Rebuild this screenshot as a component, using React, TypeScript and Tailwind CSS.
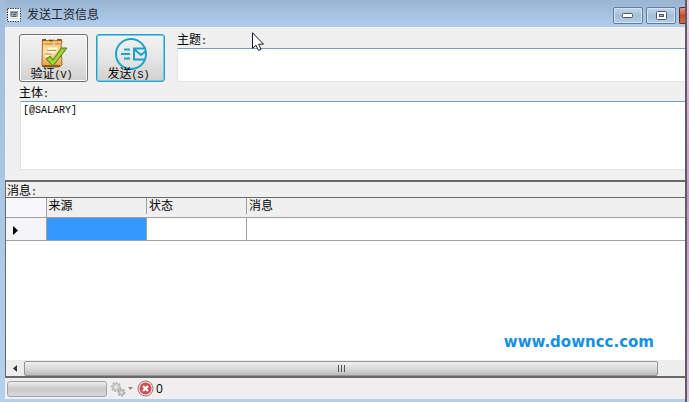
import React from "react";

const Latin = ({ children }: { children: React.ReactNode }) => (
  <span className="font-['Liberation_Mono',monospace] text-[10px]">{children}</span>
);

function AppIcon() {
  return (
    <svg width="14" height="14" viewBox="0 0 14 14" aria-hidden="true">
      <rect width="14" height="14" rx="1" fill="#f4f7fa" />
      <rect x=".5" y=".5" width="13" height="13" fill="none" stroke="#30363e" strokeDasharray="1.5 1" />
      <rect x="3" y="3" width="8" height="6" fill="#9aa5b3" />
      <path d="M4 4.5h2m1 0h3M4 6.5h1m1 0h3M5 8.5h4" stroke="#515d6c" />
      <path d="M3 10.5h8" stroke="#d0d8e0" />
    </svg>
  );
}

function VerifyIcon() {
  return (
    <svg className="shrink-0" width="32" height="32" viewBox="0 0 30 32" aria-hidden="true">
      <defs>
        <linearGradient id="paper" x1="0" y1="0" x2="0" y2="1">
          <stop offset="0" stopColor="#f3b75b" />
          <stop offset=".45" stopColor="#fde5ae" />
          <stop offset="1" stopColor="#e99a35" />
        </linearGradient>
      </defs>
      <path d="M3.500 2.500 6 1l2 2 2-1 2 1 3-1 2 1 3-2 3 2-1 4 1 20-3 2H5l-2-2z" fill="url(#paper)" stroke="#a76a25" />
      <path d="M3 2h4M10 2.500h4M18 2h5M3 28h18" stroke="#7c4318" strokeWidth="1.500" />
      <path d="M5 6h9M16 6h5" stroke="#b98137" />
      <path d="M9 10.500h9M9 14h7M6 18h5" stroke="#fff8df" strokeWidth="2" />
      <path d="M8 12.500h9M6 16h6" stroke="#c99245" />
      <path d="m7 21 4-3 3 4 8-12h6L14 28z" fill="#8fc02e" stroke="#55801b" />
      <path d="m10 21 4 4 10-13" fill="none" stroke="#a8d63f" strokeWidth="2" />
    </svg>
  );
}

function SendIcon() {
  return (
    <svg className="shrink-0" width="32" height="32" viewBox="0 0 32 32" fill="none" stroke="#1ba3c6" strokeWidth="2" aria-hidden="true">
      <circle cx="16" cy="16" r="15" />
      <path d="M31 10.500H19v11h11M19 11l7 6 5-4M9 11.500h6M6 16h9M9 20.500h6" />
    </svg>
  );
}

function ToolButton({ icon, label, hotkey, active = false }: { icon: React.ReactNode; label: string; hotkey: string; active?: boolean }) {
  return (
    <button
      className={`flex h-12 w-[69px] shrink-0 flex-col items-center rounded-[3px] border bg-gradient-to-b from-[#f3f3f3] via-[#e6e6e6] to-[#d0d0d0] pt-[3px] ${
        active ? "border-[#2c9fc7] shadow-[inset_0_0_0_1px_#6ccdea]" : "border-[#707070] shadow-[inset_0_0_0_1px_#fafafa]"
      }`}
    >
      {icon}
      <span className="-mt-1 shrink-0 pr-1 leading-4">
        {label}
        <Latin>({hotkey})</Latin>
      </span>
    </button>
  );
}

function TitleBar() {
  const control =
    "flex h-[17px] w-[30px] items-center justify-center rounded-[2px] border border-[#5f7b9b] bg-gradient-to-b from-[#c2d6eb] via-[#a5bfda] to-[#b5cee8] shadow-[inset_0_0_0_1px_#d5e4f3]";
  return (
    <header className="flex h-[27px] items-start justify-between overflow-hidden bg-gradient-to-b from-[#9ab5d2] to-[#b2cde9] pl-[2px]">
      <div className="flex items-center gap-[6px] pt-[7px] text-[#1b2430]">
        <AppIcon />
        <h1 className="text-[12px] leading-4">发送工资信息</h1>
      </div>
      <div className="flex gap-[3px] pt-[7px]">
        <button className={control} aria-label="最小化">
          <svg width="12" height="6" viewBox="0 0 12 6">
            <rect x=".5" y=".5" width="10" height="4" rx="1" fill="#fff" stroke="#4a5868" />
          </svg>
        </button>
        <button className={control} aria-label="最大化">
          <svg width="11" height="9" viewBox="0 0 11 9">
            <rect x=".5" y=".5" width="10" height="8" rx="1" fill="#fff" stroke="#4a5868" />
            <rect x="3.500" y="3.500" width="4" height="2" fill="#9db8d2" stroke="#4a5868" />
          </svg>
        </button>
        <button
          className="h-[17px] w-[6px] rounded-l-[2px] border border-r-0 border-[#6b2a25] bg-gradient-to-b from-[#e29a88] via-[#c9492f] to-[#d36a4c]"
          aria-label="关闭"
        />
      </div>
    </header>
  );
}

function MessageForm() {
  return (
    <section className="pb-[10px] pl-[14px] pt-1">
      <div className="flex gap-2">
        <div className="flex gap-2 pt-[3px]">
          <ToolButton icon={<VerifyIcon />} label="验证" hotkey="V" />
          <ToolButton icon={<SendIcon />} label="发送" hotkey="S" active />
        </div>
        <div className="flex min-w-0 flex-1 flex-col pl-1">
          <label htmlFor="subject" className="h-[17px] leading-[18px]">
            主题<Latin>:</Latin>
          </label>
          <input
            id="subject"
            className="h-[34px] w-full border border-r-0 border-[#dfe4ea] border-t-[#7a9dbd] bg-white px-1 outline-none"
          />
        </div>
      </div>
      <label htmlFor="body" className="mt-[3px] block h-4 leading-4">
        主体<Latin>:</Latin>
      </label>
      <div className="pl-px">
        <textarea
          id="body"
          defaultValue="[@SALARY]"
          className="block h-[69px] w-full resize-none overflow-hidden border border-r-0 border-[#dfe4ea] border-t-[#7a9dbd] bg-white px-[2px] py-px font-['Liberation_Mono',monospace] text-[10px] leading-4 outline-none"
        />
      </div>
    </section>
  );
}

function MessageGrid() {
  const head = "h-[19px] p-0 align-top text-left font-normal leading-4";
  const divider = <span className="-mr-px h-4 w-px bg-[#a0a0a0]" />;
  return (
    <section className="flex flex-1 flex-col border-l border-t-2 border-[#696969] bg-[#f0f0f0]">
      <h2 className="h-[15px] pl-px leading-[18px]">
        消息<Latin>:</Latin>
      </h2>
      <div className="flex flex-1 flex-col border-b-2 border-t border-[#696969] bg-white">
        <table className="w-full table-fixed border-collapse">
          <colgroup>
            <col className="w-10" />
            <col className="w-[100px]" />
            <col className="w-[100px]" />
            <col />
          </colgroup>
          <thead>
            <tr className="border-b border-[#a0a0a0] bg-[#f0f0f0]">
              <th className={`${head} border-r border-[#a0a0a0] bg-[#f8f8fa]`} aria-label="行" />
              <th className={head}>
                <div className="flex justify-between pl-[2px]">来源{divider}</div>
              </th>
              <th className={head}>
                <div className="flex justify-between pl-[3px]">状态{divider}</div>
              </th>
              <th className={head}>
                <div className="pl-[3px]">消息</div>
              </th>
            </tr>
          </thead>
          <tbody>
            <tr className="h-[23px] border-b border-[#a0a0a0]">
              <td className="border-r border-[#a0a0a0] bg-[#f5f5f8] p-0">
                <svg className="ml-[7px] mt-[3px]" width="5" height="9" viewBox="0 0 5 9" aria-hidden="true">
                  <path d="M0 0v9l5-4.500z" />
                </svg>
              </td>
              <td className="border-r border-[#a0a0a0] bg-[#3399ff] p-0" />
              <td className="border-r border-[#a0a0a0] p-0" />
              <td className="p-0" />
            </tr>
          </tbody>
        </table>
        <div className="flex flex-1 items-end justify-end pb-[6px] pr-[31px]">
          <a href="#site" className="font-['DejaVu_Sans',sans-serif] text-[15px] font-bold leading-6 text-[#1490e0]">
            www.downcc.com
          </a>
        </div>
        <div className="flex h-4 items-center bg-[#ededed]">
          <button className="flex h-4 w-[18px] items-center justify-center" aria-label="向左滚动">
            <svg width="4" height="7" viewBox="0 0 4 7">
              <path d="M4 0v7L0 3.500z" fill="#333" />
            </svg>
          </button>
          <div className="mr-[27px] flex h-[15px] flex-1 items-center justify-center gap-[2px] rounded-[2px] border border-[#949494] bg-gradient-to-b from-[#f1f1f1] via-[#dadada] to-[#bdbdbd]">
            <span className="h-[7px] w-px bg-[#555]" />
            <span className="h-[7px] w-px bg-[#555]" />
            <span className="h-[7px] w-px bg-[#555]" />
          </div>
        </div>
      </div>
    </section>
  );
}

function StatusBar() {
  return (
    <footer className="flex h-[21px] items-center bg-[#f0eeee] pl-[2px]">
      <div
        role="progressbar"
        aria-label="进度"
        className="h-4 w-[100px] rounded-[3px] border border-[#a4a4a4] bg-gradient-to-b from-[#eeeeee] via-[#c9c9c9] to-[#d9d9d9]"
      />
      <button className="ml-[3px] flex items-center gap-[2px]" aria-label="选项">
        <svg width="16" height="16" viewBox="0 0 16 16">
          <circle cx="6" cy="6" r="4" fill="#cfcfcf" stroke="#b5b5b5" strokeWidth="2" strokeDasharray="2 1" />
          <circle cx="6" cy="6" r="1.500" fill="#eee" />
          <circle cx="11.500" cy="11.500" r="3" fill="#c6c6c6" stroke="#aaa" strokeWidth="2" strokeDasharray="2 1" />
          <circle cx="11.500" cy="11.500" r="1" fill="#eee" />
        </svg>
        <svg width="5" height="3" viewBox="0 0 5 3">
          <path d="M0 0h5L2.500 3z" fill="#888" />
        </svg>
      </button>
      <svg className="ml-1" width="17" height="17" viewBox="0 0 17 17" aria-hidden="true">
        <circle cx="8.500" cy="8.500" r="7.500" fill="#f7eeee" stroke="#9b6c6c" />
        <circle cx="8.500" cy="8.500" r="6" fill="#cf4d50" />
        <path d="m6 6 5 5m0-5-5 5" stroke="#fff" strokeWidth="2.200" />
      </svg>
      <span className="ml-[2px] font-['Open_Sans',sans-serif] text-[12px] leading-4">0</span>
    </footer>
  );
}

export default function App() {
  return (
    <div className="relative flex min-h-screen bg-[#b6d0ea] font-['Liberation_Sans','Noto_Sans_CJK_SC',sans-serif] text-[12px] text-black">
      <div className="w-[5px] shrink-0 bg-gradient-to-b from-[#a3bddb] to-[#b4d2ec]" />
      <main className="flex min-w-0 flex-1 flex-col bg-[#f0f0f0]">
        <TitleBar />
        <MessageForm />
        <MessageGrid />
        <StatusBar />
        <div className="h-[3px] bg-[#b4cfe9]" />
      </main>
      <div className="w-[2px] shrink-0 bg-[#5c5c66]" />
      <div className="w-[2px] shrink-0 bg-gradient-to-b from-[#e8cfe0] via-[#c79bc0] to-[#d9c3da]" />
      <svg className="pointer-events-none absolute left-[252px] top-8" width="12" height="20" viewBox="0 0 12 20" aria-hidden="true">
        <path d="M.5.7v15.800l3.500-3.300 2.500 5.300 2.500-1.200-2.400-5.100h4.900z" fill="#fff" stroke="#1c1c28" />
      </svg>
    </div>
  );
}
